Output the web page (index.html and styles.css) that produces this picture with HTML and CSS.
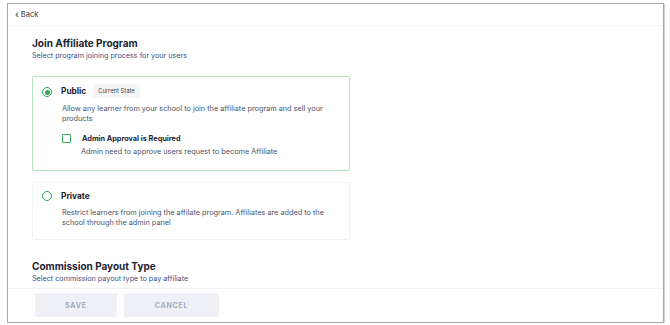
FILE: index.html
```html
<!DOCTYPE html>
<html>
<head>
<meta charset="utf-8">
<link rel="stylesheet" href="styles.css">
</head>
<body>
<div class="frame">
  <div class="topbar"><span class="chev">&#8249;</span> Back</div>
  <div class="content">
    <h2 class="title">Join Affiliate Program</h2>
    <p class="subtitle">Select program joining process for your users</p>

    <div class="option selected">
      <div class="opt-row">
        <span class="radio on"><span class="dot"></span></span>
        <span class="opt-label">Public</span>
        <span class="badge">Current State</span>
      </div>
      <p class="opt-desc">Allow any learner from your school to join the affiliate program and sell your products</p>
      <div class="check-row">
        <span class="checkbox"></span>
        <span class="check-label">Admin Approval is Required</span>
      </div>
      <p class="check-desc">Admin need to approve users request to become Affiliate</p>
    </div>

    <div class="option">
      <div class="opt-row">
        <span class="radio"></span>
        <span class="opt-label">Private</span>
      </div>
      <p class="opt-desc">Restrict learners from joining the affilate program. Affiliates are added to the school through the admin panel</p>
    </div>

    <h2 class="title second">Commission Payout Type</h2>
    <p class="subtitle">Select commission payout type to pay affiliate</p>
  </div>
  <div class="footer">
    <button class="btn save">SAVE</button>
    <button class="btn cancel">CANCEL</button>
  </div>
</div>
</body>
</html>
```

FILE: styles.css
```css
* { box-sizing: border-box; }
html, body { margin: 0; padding: 0; background: #ffffff; }
body { font-family: "Inter", "Liberation Sans", sans-serif; color: #475467; }

.frame {
  margin: 3px 6px 0 7px;
  height: 320px;
  border: 1px solid #a9a9a9;
  box-shadow: 1px 1px 0 #cfcfcf;
  display: flex;
  flex-direction: column;
  overflow: hidden;
  background: #fff;
}

.topbar {
  height: 22px;
  flex: none;
  display: flex;
  align-items: center;
  padding-left: 7px;
  font-size: 7.5px;
  color: #2d3440;
  border-bottom: 1px solid #f1f1f3;
  gap: 2px;
}
.chev { font-size: 10px; line-height: 1; margin-top: -2px; }

.content {
  flex: 1;
  padding: 10px 0 0 24px;
  overflow: hidden;
}

.title {
  margin: 0;
  font-size: 10px;
  line-height: 14px;
  font-weight: 700;
  color: #1d2433;
}
.title.second { margin-top: 19px; }

.subtitle {
  margin: 0;
  font-size: 7.2px;
  line-height: 12px;
  color: #3b5080;
}

.option {
  width: 318px;
  border: 1px solid #f0f1f3;
  border-radius: 2px;
  padding: 6px 10px 11px 8px;
  margin-top: 11px;
}
.option.selected {
  border-color: #b4e2be;
  margin-top: 14px;
  padding-bottom: 13px;
}

.opt-row {
  display: flex;
  align-items: center;
  height: 14px;
}
.option.selected .opt-row { margin-top: 1px; }

.radio {
  width: 10px;
  height: 10px;
  border: 1.3px solid #2aa952;
  border-radius: 50%;
  display: flex;
  align-items: center;
  justify-content: center;
  margin-left: 1px;
  margin-right: 9px;
  flex: none;
}
.radio.on { margin-top: 2px; }
.dot { width: 5px; height: 5px; border-radius: 50%; background: #2aa952; }

.opt-label {
  font-size: 8.3px;
  font-weight: 700;
  color: #1d2433;
}
.option.selected .opt-label { margin-top: -1px; }

.badge {
  margin-left: 7px;
  height: 14px;
  padding: 0 5px;
  background: #f4f5f7;
  border-radius: 2px;
  font-size: 5.8px;
  line-height: 14px;
  color: #3a4152;
}

.opt-desc {
  margin: 5px 0 0 21px;
  font-size: 7.3px;
  line-height: 10px;
  color: #4a5468;
}
.option.selected .opt-desc { margin-top: 6px; }

.check-row {
  display: flex;
  align-items: center;
  margin: 9px 0 0 21px;
  height: 10px;
}
.checkbox {
  width: 9px;
  height: 9px;
  border: 1.3px solid #36b45a;
  border-radius: 1px;
  margin-right: 11px;
  flex: none;
}
.check-label {
  font-size: 7.3px;
  font-weight: 700;
  color: #1d2433;
}
.check-desc {
  margin: 4px 0 0 40px;
  font-size: 7.3px;
  line-height: 10px;
  color: #4a5468;
}

.footer {
  flex: none;
  height: 34px;
  border-top: 1px solid #f1f1f3;
  padding: 4px 0 0 27px;
  display: flex;
  gap: 7px;
  align-items: flex-start;
}
.btn {
  height: 24px;
  border: none;
  border-radius: 2px;
  background: #eef0f6;
  color: #a2acc0;
  font-family: "Inter", "Liberation Sans", sans-serif;
  font-size: 7px;
  font-weight: 700;
  letter-spacing: 0.8px;
  padding: 0;
}
.save { width: 82px; }
.cancel { width: 95px; }
```
